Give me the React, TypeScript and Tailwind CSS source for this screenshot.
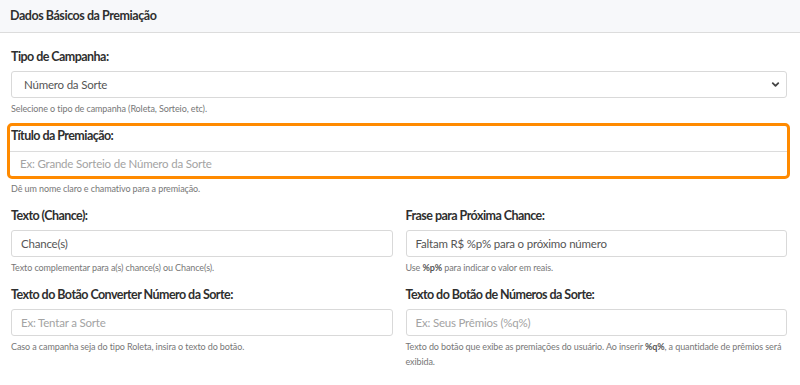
import { ChevronDown } from "lucide-react";

const font = { fontFamily: "Lato, 'Noto Sans', sans-serif" };

function Label({ children, className = "mb-[6px]" }: { children: React.ReactNode; className?: string }) {
  return (
    <p className={`text-[12.5px] font-bold text-[#2f2f2f] leading-4 tracking-[-0.55px] ${className}`}>{children}</p>
  );
}

function Help({ children }: { children: React.ReactNode }) {
  return <p className="text-[9px] text-[#777] leading-[15px] tracking-[-0.1px] mt-[3px]">{children}</p>;
}

function Input({ value, placeholder }: { value?: string; placeholder?: string }) {
  return (
    <div className="h-[27px] border border-[#d9d9d9] rounded-[3px] bg-white flex items-center px-[9px] text-[11.5px] tracking-[-0.2px]">
      {value ? (
        <span className="text-[#555]">{value}</span>
      ) : (
        <span className="text-[#a3a3a3]">{placeholder}</span>
      )}
    </div>
  );
}

export default function App() {
  return (
    <div className="w-[800px] h-[385px] bg-white overflow-hidden" style={font}>
      <div className="h-[33px] bg-[#f7f8fa] border-b border-[#dcdcdc] flex items-center px-[10px]">
        <h2 className="text-[12.5px] font-bold text-[#2f2f2f] tracking-[-0.45px]">Dados Básicos da Premiação</h2>
      </div>

      <div className="pl-[11px] pr-[13px] pt-[16px]">
        <div>
          <Label>Tipo de Campanha:</Label>
          <div className="h-[27px] border border-[#d9d9d9] rounded-[3px] bg-white flex items-center justify-between pl-[12px] pr-[5px] text-[11.5px] tracking-[-0.2px]">
            <span className="text-[#555]">Número da Sorte</span>
            <ChevronDown className="w-[11px] h-[11px] text-[#444]" strokeWidth={4} />
          </div>
          <Help>Selecione o tipo de campanha (Roleta, Sorteio, etc).</Help>
        </div>

        <div className="mt-[10px] -ml-px outline-[3px] outline-solid outline-[#ff8a00] rounded-[2px]">
          <div className="pt-[2px] pl-px">
            <Label className="mb-[7px]">Título da Premiação:</Label>
          </div>
          <div className="h-[25px] border-t border-[#dcdcdc] flex items-center px-[10px] text-[11.5px] tracking-[-0.2px]">
            <span className="text-[#a3a3a3]">Ex: Grande Sorteio de Número da Sorte</span>
          </div>
        </div>
        <div className="pt-[2px]">
          <Help>Dê um nome claro e chamativo para a premiação.</Help>
        </div>

        <div className="grid grid-cols-2 gap-x-[13px] mt-[12px]">
          <div>
            <Label className="mb-[6px]">Texto (Chance):</Label>
            <Input value="Chance(s)" />
            <Help>Texto complementar para a(s) chance(s) ou Chance(s).</Help>
          </div>
          <div>
            <Label className="mb-[6px]">Frase para Próxima Chance:</Label>
            <Input value="Faltam R$ %p% para o próximo número" />
            <Help>
              Use <b className="text-[#555]">%p%</b> para indicar o valor em reais.
            </Help>
          </div>
          <div className="mt-[12px]">
            <Label>Texto do Botão Converter Número da Sorte:</Label>
            <Input placeholder="Ex: Tentar a Sorte" />
            <Help>Caso a campanha seja do tipo Roleta, insira o texto do botão.</Help>
          </div>
          <div className="mt-[12px]">
            <Label>Texto do Botão de Números da Sorte:</Label>
            <Input placeholder="Ex: Seus Prêmios (%q%)" />
            <Help>
              Texto do botão que exibe as premiações do usuário. Ao inserir{" "}
              <b className="text-[#555]">%q%</b>, a quantidade de prêmios será exibida.
            </Help>
          </div>
        </div>
      </div>
    </div>
  );
}
